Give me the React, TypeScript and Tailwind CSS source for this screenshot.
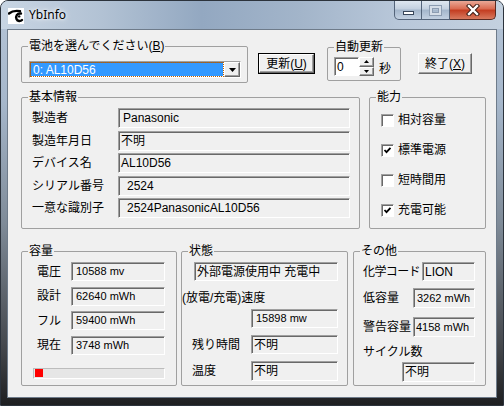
import React from 'react'

const sunken =
  'border border-t-[#a0a0a0] border-l-[#a0a0a0] border-r-white border-b-white shadow-[inset_1px_1px_0_#696969]'
const raised =
  'border border-t-white border-l-white border-r-[#696969] border-b-[#696969] shadow-[inset_-1px_-1px_0_#a0a0a0]'

function Field({
  className = '',
  small,
  children,
}: {
  className?: string
  small?: boolean
  children?: React.ReactNode
}) {
  return (
    <div
      className={`flex shrink-0 items-center overflow-hidden whitespace-nowrap bg-[#f0f0f0] leading-none text-black ${
        small ? 'text-[11px]' : 'text-[12px]'
      } ${sunken} ${className}`}
    >
      {children}
    </div>
  )
}

function Group({
  title,
  className = '',
  children,
}: {
  title: React.ReactNode
  className?: string
  children?: React.ReactNode
}) {
  return (
    <fieldset className={`shrink-0 rounded-[2px] border border-[#a0a0a0] ${className}`}>
      <legend className="ml-[6px] whitespace-nowrap px-[1px] text-[12px] leading-[14px] text-black">{title}</legend>
      {children}
    </fieldset>
  )
}

function CheckBox({ checked, label }: { checked?: boolean; label: string }) {
  return (
    <div className="flex h-[30px] items-center gap-[4px]">
      <div className={`flex h-[13px] w-[13px] items-center justify-center bg-white ${sunken}`}>
        {checked && (
          <svg width="9" height="9" viewBox="0 0 9 9">
            <path d="M1.5 4 L3.5 6.2 L7.5 1.8" fill="none" stroke="#000" strokeWidth="1.8" />
          </svg>
        )}
      </div>
      <span className="whitespace-nowrap text-[12px] leading-none">{label}</span>
    </div>
  )
}

function TitleBar() {
  return (
    <div className="flex h-[28px] shrink-0 items-start bg-[linear-gradient(90deg,#c8d5e3_0%,#b2c2d4_20%,#93a8c1_40%,#a3b5ca_60%,#b9c8da_80%,#c4d1df_100%)]">
      <div className="ml-[7px] mt-[7px] flex h-[16px] w-[16px] items-center justify-center bg-white">
        <svg width="16" height="16" viewBox="0 0 16 16">
          <path d="M1 5.5 C4 3 8 2.5 12 3.2" fill="none" stroke="#000" strokeWidth="2.4" strokeLinecap="round" />
          <path d="M13 5.5 C9 5 7.5 8 8.5 11 C9.5 13.5 12.5 13.5 14 12" fill="none" stroke="#000" strokeWidth="2.4" strokeLinecap="round" />
          <circle cx="11.2" cy="8.4" r="1.2" fill="#000" />
        </svg>
      </div>
      <span className="ml-[5px] mt-[6px] text-[12px] leading-[16px] text-black [font-family:'Noto_Sans',sans-serif] [text-shadow:0_0_6px_#fff,0_0_3px_#fff]">
        YbInfo
      </span>
      <div className="ml-auto mr-[7px] flex">
        <div className="flex h-[19px] w-[28px] items-end justify-center rounded-bl-[5px] border border-t-0 border-[#54647a] bg-[linear-gradient(180deg,#dfe7f0_0%,#c3d0df_45%,#a4b6cb_50%,#c3d1e2_100%)] pb-[4px]">
          <div className="h-[4px] w-[11px] border border-[#38465a] bg-white" />
        </div>
        <div className="flex h-[19px] w-[28px] items-center justify-center border border-l-0 border-t-0 border-[#54647a] bg-[linear-gradient(180deg,#dfe7f0_0%,#c3d0df_45%,#a4b6cb_50%,#c3d1e2_100%)]">
          <div className="h-[9px] w-[11px] border-2 border-[#d6dee8] shadow-[0_0_0_1px_#8d9db2,inset_0_0_0_1px_#8d9db2]" />
        </div>
        <div className="flex h-[19px] w-[46px] items-center justify-center rounded-br-[5px] border border-l-0 border-t-0 border-[#5a2a22] bg-[linear-gradient(180deg,#e9a897_0%,#d9684e_45%,#c33c20_50%,#d87a5f_100%)]">
          <svg width="14" height="12" viewBox="0 0 14 12">
            <path d="M3 2 L11 10 M11 2 L3 10" stroke="#3b1b14" strokeWidth="4.4" strokeLinecap="square" />
            <path d="M3 2 L11 10 M11 2 L3 10" stroke="#fff" strokeWidth="2.4" strokeLinecap="square" />
          </svg>
        </div>
      </div>
    </div>
  )
}

function Button({ children, def }: { children: React.ReactNode; def?: boolean }) {
  return (
    <div className={def ? 'border border-black' : ''}>
      <div
        className={`flex items-center justify-center whitespace-nowrap bg-[#f0f0f0] text-[12px] leading-none ${raised} ${
          def ? 'h-[19px] w-[55px]' : 'h-[21px] w-[54px]'
        }`}
      >
        {children}
      </div>
    </div>
  )
}

const label = 'shrink-0 whitespace-nowrap text-[12px] leading-none'

export default function App() {
  return (
    <div className="flex h-[406px] w-[504px] flex-col overflow-hidden rounded-t-[8px] border border-[#2c333c] bg-[linear-gradient(180deg,#b6c5d7_0%,#a6b7cb_25%,#7f8b98_55%,#45484d_85%,#1e1f21_100%)] text-black [font-family:'Liberation_Sans','Noto_Sans_CJK_JP',sans-serif]">
      <TitleBar />
      <div className="ml-[6px] flex h-[369px] w-[490px] flex-col border border-[#6e7b8a] bg-[#f0f0f0]">
        {/* top row */}
        <div className="flex h-[60px] shrink-0 items-start">
          <Group
            className="ml-[13px] mt-[9px] h-[44px] w-[227px]"
            title={
              <>
                電池を選んでください(<span className="underline">B</span>)
              </>
            }
          >
            <div className={`ml-[7px] mt-[8px] flex h-[17px] w-[212px] items-stretch bg-white ${sunken}`}>
              <div className="m-[1px] flex flex-1 items-center bg-[#3399ff] px-[2px] text-[12px] leading-none text-white outline-1 outline-dotted outline-[#c06000]">
                0: AL10D56
              </div>
              <div className={`flex w-[16px] items-center justify-center bg-[#f0f0f0] ${raised}`}>
                <svg width="7" height="4" viewBox="0 0 7 4">
                  <path d="M0 0 H7 L3.5 4 Z" fill="#000" />
                </svg>
              </div>
            </div>
          </Group>
          <div className="ml-[10px] mt-[23px]">
            <Button def>
              更新(<span className="underline">U</span>)
            </Button>
          </div>
          <Group className="ml-[12px] mt-[10px] h-[41px] w-[74px]" title="自動更新">
            <div className="ml-[6px] mt-[3px] flex items-center">
              <Field className="h-[19px] w-[25px] !bg-white pl-[2px]">0</Field>
              <div className="flex h-[19px] w-[15px] flex-col">
                <div className={`flex flex-1 items-center justify-center bg-[#f0f0f0] ${raised}`}>
                  <svg width="5" height="3" viewBox="0 0 5 3">
                    <path d="M0 3 H5 L2.5 0 Z" fill="#000" />
                  </svg>
                </div>
                <div className={`flex flex-1 items-center justify-center bg-[#f0f0f0] ${raised}`}>
                  <svg width="5" height="3" viewBox="0 0 5 3">
                    <path d="M0 0 H5 L2.5 3 Z" fill="#000" />
                  </svg>
                </div>
              </div>
              <span className="ml-[5px] mt-[4px] text-[12px] leading-none">秒</span>
            </div>
          </Group>
          <div className="ml-[17px] mt-[23px]">
            <Button>
              終了(<span className="underline">X</span>)
            </Button>
          </div>
        </div>

        {/* middle row */}
        <div className="flex h-[154px] shrink-0 items-start">
          <Group className="ml-[13px] h-[139px] w-[339px]" title="基本情報">
            <div className="mt-[4px] flex flex-col gap-[2.5px] pl-[10px]">
              {[
                ['製造者', 'Panasonic', 'pl-[4px]'],
                ['製造年月日', '不明', 'pl-[2px]'],
                ['デバイス名', 'AL10D56', 'pl-[2px]'],
                ['シリアル番号', '2524', 'pl-[8px]'],
                ['一意な識別子', '2524PanasonicAL10D56', 'pl-[8px]'],
              ].map(([name, value, pad]) => (
                <div key={name} className="flex h-[20px] items-center">
                  <span className={`w-[86px] ${label}`}>{name}</span>
                  <Field className={`h-[20px] w-[232px] ${pad}`}>{value}</Field>
                </div>
              ))}
            </div>
          </Group>
          <Group className="ml-[9px] h-[139px] w-[117px]" title="能力">
            <div className="mt-[1px] flex flex-col pl-[11px]">
              <CheckBox label="相対容量" />
              <CheckBox checked label="標準電源" />
              <CheckBox label="短時間用" />
              <CheckBox checked label="充電可能" />
            </div>
          </Group>
        </div>

        {/* bottom row */}
        <div className="flex shrink-0 items-start">
          <Group className="ml-[13px] h-[142px] w-[156px]" title="容量">
            <div className="mt-[4px] flex flex-col pl-[11px]">
              <div className="flex flex-col gap-[5.5px]">
                {[
                  ['電圧', '10588 mv'],
                  ['設計', '62640 mWh'],
                  ['フル', '59400 mWh'],
                  ['現在', '3748 mWh'],
                ].map(([name, value]) => (
                  <div key={name} className="flex h-[19px] items-center">
                    <span className={`ml-[4px] w-[34px] ${label}`}>{name}</span>
                    <Field small className="h-[19px] w-[94px] pl-[4px]">
                      {value}
                    </Field>
                  </div>
                ))}
              </div>
              <div className="mt-[13px] flex h-[11px] w-[132px] items-center border border-[#bcbcbc] border-b-white border-r-white bg-[#e6e6e6] pl-[1px]">
                <div className="h-[8px] w-[8px] bg-[#ff0000]" />
              </div>
            </div>
          </Group>
          <Group className="ml-[4px] h-[142px] w-[167px]" title="状態">
            <div className="flex flex-col">
              <Field className="ml-[12px] mt-[4px] h-[19px] w-[144px] pl-[2px]">外部電源使用中 充電中</Field>
              <span className={`mt-[10px] h-[14px] !leading-[14px] ${label}`}>(放電/充電)速度</span>
              <Field small className="ml-[69px] mt-[4px] h-[19px] w-[87px] pl-[4px]">
                15898 mw
              </Field>
              <div className="mt-[7px] flex h-[19px] items-center">
                <span className={`ml-[10px] w-[59px] ${label}`}>残り時間</span>
                <Field className="h-[19px] w-[87px] pl-[2px]">不明</Field>
              </div>
              <div className="mt-[7px] flex h-[20px] items-center">
                <span className={`ml-[10px] w-[59px] ${label}`}>温度</span>
                <Field className="h-[20px] w-[87px] pl-[2px]">不明</Field>
              </div>
            </div>
          </Group>
          <Group className="ml-[5px] h-[142px] w-[133px]" title="その他">
            <div className="flex flex-col pl-[9px]">
              <div className="mt-[4px] flex h-[19px] items-center">
                <span className={`w-[59px] tracking-[-0.6px] ${label}`}>化学コード</span>
                <Field className="h-[19px] w-[53px] pl-[2px]">LION</Field>
              </div>
              <div className="mt-[7px] flex h-[20px] items-center">
                <span className={`w-[50px] ${label}`}>低容量</span>
                <Field small className="h-[20px] w-[62px] pl-[3px]">
                  3262 mWh
                </Field>
              </div>
              <div className="mt-[9px] flex h-[20px] items-center">
                <span className={`w-[50px] ${label}`}>警告容量</span>
                <Field small className="h-[20px] w-[62px] pl-[2px]">
                  4158 mWh
                </Field>
              </div>
              <span className={`mt-[8px] h-[14px] !leading-[14px] ${label}`}>サイクル数</span>
              <Field className="ml-[39px] mt-[3px] h-[20px] w-[73px] pl-[2px]">不明</Field>
            </div>
          </Group>
        </div>
      </div>
    </div>
  )
}
